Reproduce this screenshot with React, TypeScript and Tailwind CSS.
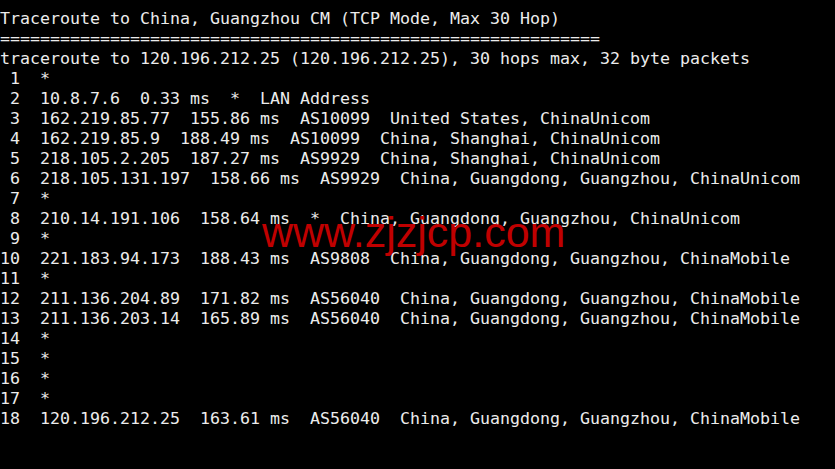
import React from "react";

const lines = [
  "Traceroute to China, Guangzhou CM (TCP Mode, Max 30 Hop)",
  "============================================================",
  "traceroute to 120.196.212.25 (120.196.212.25), 30 hops max, 32 byte packets",
  " 1  *",
  " 2  10.8.7.6  0.33 ms  *  LAN Address",
  " 3  162.219.85.77  155.86 ms  AS10099  United States, ChinaUnicom",
  " 4  162.219.85.9  188.49 ms  AS10099  China, Shanghai, ChinaUnicom",
  " 5  218.105.2.205  187.27 ms  AS9929  China, Shanghai, ChinaUnicom",
  " 6  218.105.131.197  158.66 ms  AS9929  China, Guangdong, Guangzhou, ChinaUnicom",
  " 7  *",
  " 8  210.14.191.106  158.64 ms  *  China, Guangdong, Guangzhou, ChinaUnicom",
  " 9  *",
  "10  221.183.94.173  188.43 ms  AS9808  China, Guangdong, Guangzhou, ChinaMobile",
  "11  *",
  "12  211.136.204.89  171.82 ms  AS56040  China, Guangdong, Guangzhou, ChinaMobile",
  "13  211.136.203.14  165.89 ms  AS56040  China, Guangdong, Guangzhou, ChinaMobile",
  "14  *",
  "15  *",
  "16  *",
  "17  *",
  "18  120.196.212.25  163.61 ms  AS56040  China, Guangdong, Guangzhou, ChinaMobile",
];

export default function App() {
  return (
    <div className="relative w-[835px] h-[469px] bg-black overflow-hidden">
      <pre className="m-0 pt-[9px] pl-0 text-[#ececec] text-[16.61px] leading-[20px] whitespace-pre font-['DejaVu_Sans_Mono',monospace]">
        {lines.join("\n")}
      </pre>
      <div className="absolute left-[262px] top-[202px] text-[43px] leading-[60px] text-[#c00000] whitespace-nowrap font-['Liberation_Sans',Arial,sans-serif]">
        www.zjzjcp.com
      </div>
    </div>
  );
}
